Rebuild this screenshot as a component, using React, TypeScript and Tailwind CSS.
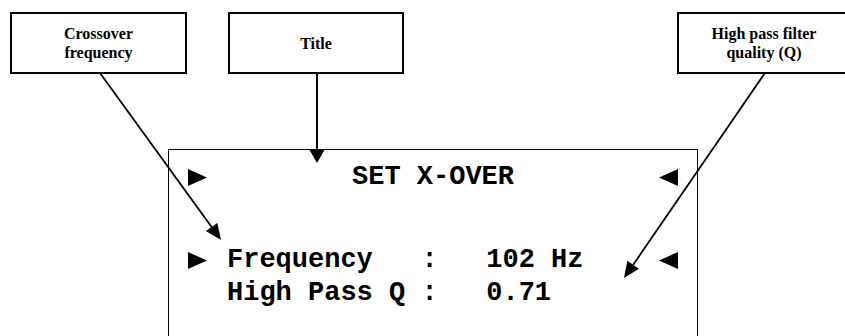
import React from 'react';

// --- Small pieces ---
const Tri: React.FC<{ dir: 'right' | 'left' }> = ({ dir }) => (
  <svg width="19" height="17" viewBox="0 0 19 17" className="shrink-0">
    {dir === 'right' ? <polygon points="0,0 19,8.5 0,17" fill="#000" /> : <polygon points="19,0 0,8.5 19,17" fill="#000" />}
  </svg>
);

const Label: React.FC<{ children: React.ReactNode; className?: string }> = ({ children, className = '' }) => (
  <div className={`h-[62px] shrink-0 border-2 border-black bg-white flex items-center justify-center text-center font-['Liberation_Serif',serif] font-bold text-[16px] leading-[19px] text-black ${className}`}>
    {children}
  </div>
);

const Arrows = () => (
  <svg className="absolute inset-0 pointer-events-none" width="845" height="336" viewBox="0 0 845 336">
    {/* crossover frequency */}
    <line x1="100" y1="73" x2="211.6" y2="227" stroke="#000" strokeWidth="1.8" />
    <polygon points="221,240 205.9,231.1 217.3,222.9" fill="#000" />
    {/* title */}
    <line x1="317" y1="73" x2="317" y2="150" stroke="#000" strokeWidth="2" />
    <polygon points="317,163 309,149 325,149" fill="#000" />
    {/* high pass Q */}
    <line x1="765" y1="73" x2="633" y2="265" stroke="#000" strokeWidth="1.8" />
    <polygon points="624,278 638.9,268.8 627.3,260.8" fill="#000" />
  </svg>
);

export default function App() {
  return (
    <div className="relative w-[845px] h-[336px] overflow-hidden bg-white">
      <div className="flex items-start pt-[12px]">
        <Label className="ml-[10px] w-[177px]">Crossover<br />frequency</Label>
        <Label className="ml-[41px] w-[176px]">Title</Label>
        <Label className="ml-[273px] w-[174px]">High pass filter<br />quality (Q)</Label>
      </div>

      <div className="mt-[75px] ml-[168px] w-[530px] h-[200px] border border-black font-['Liberation_Mono',monospace] font-bold text-[27px] leading-[33px] text-black pt-[11px]">
        <div className="flex items-center px-[19px]">
          <Tri dir="right" />
          <div className="flex-1 text-center">SET X-OVER</div>
          <Tri dir="left" />
        </div>
        <div className="mt-[50px] flex items-center px-[19px]">
          <Tri dir="right" />
          <div className="ml-[20px] whitespace-pre">{'Frequency   :   102 Hz'}</div>
          <div className="ml-auto"><Tri dir="left" /></div>
        </div>
        <div className="pl-[58px] whitespace-pre">{'High Pass Q :   0.71'}</div>
      </div>

      <Arrows />
    </div>
  );
}
